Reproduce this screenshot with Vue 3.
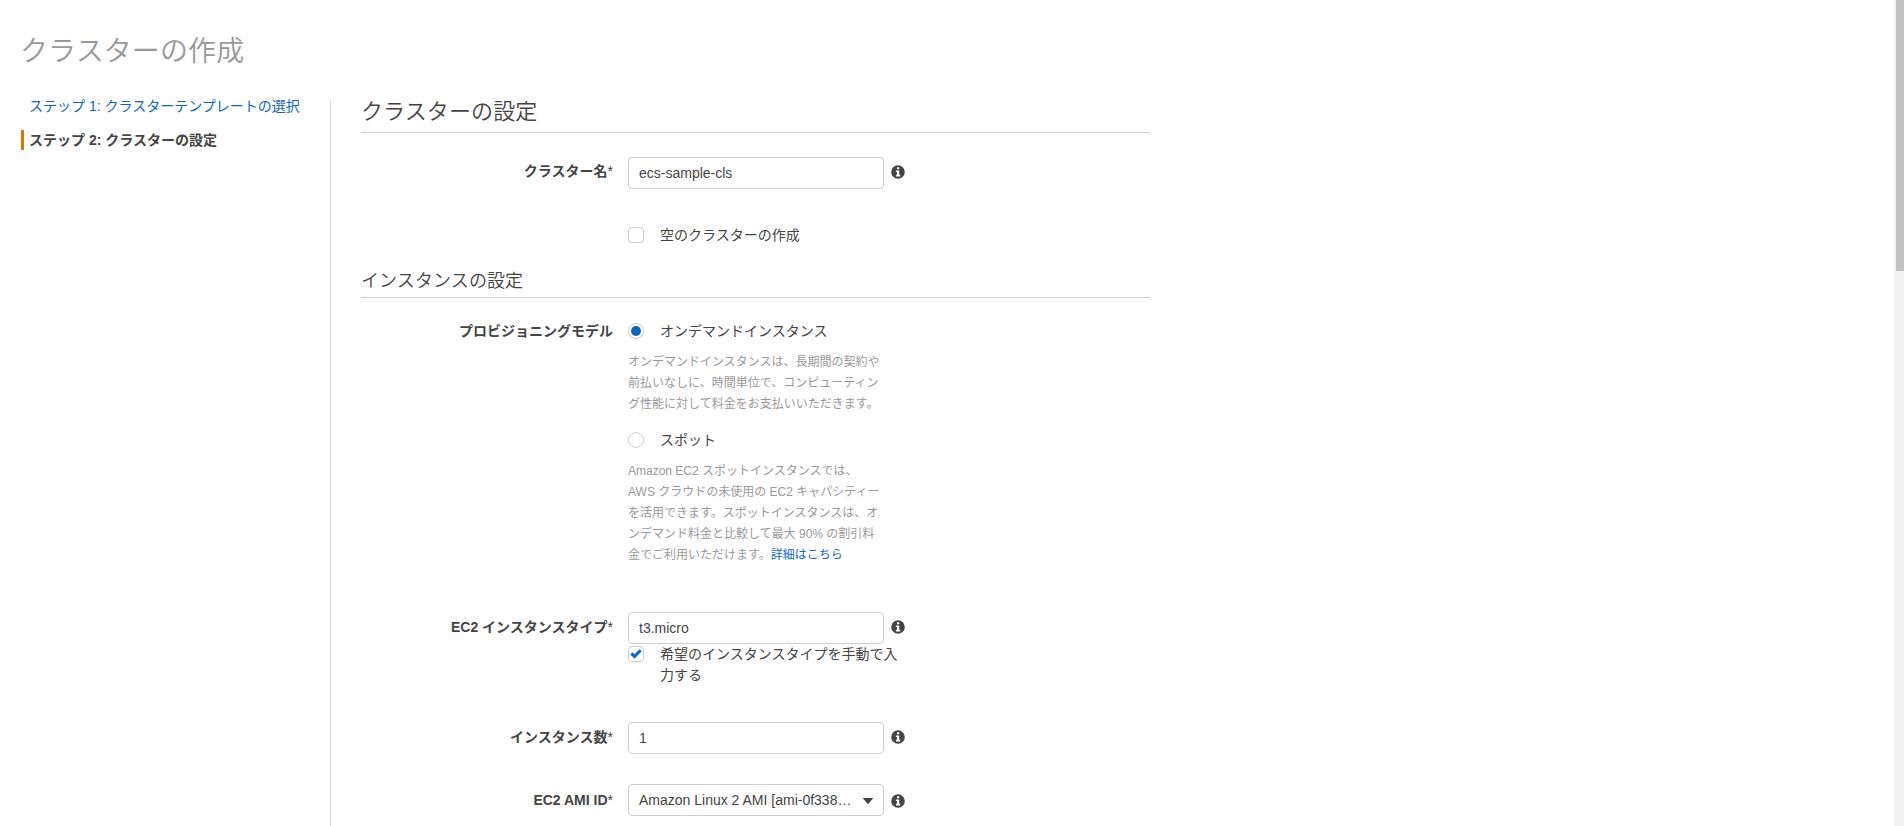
<script setup>
import { ref } from 'vue'

const clusterName = ref('ecs-sample-cls')
const emptyCluster = ref(false)
const model = ref('ondemand')
const instanceType = ref('t3.micro')
const manualType = ref(true)
const count = ref('1')

const onDemandHelp = [
  'オンデマンドインスタンスは、長期間の契約や',
  '前払いなしに、時間単位で、コンピューティン',
  'グ性能に対して料金をお支払いいただきます。',
]
const spotHelp = [
  'Amazon EC2 スポットインスタンスでは、',
  'AWS クラウドの未使用の EC2 キャパシティー',
  'を活用できます。スポットインスタンスは、オ',
  'ンデマンド料金と比較して最大 90% の割引料',
]
const infoPath =
  'M7 .2a6.8 6.8 0 1 0 0 13.6A6.8 6.8 0 0 0 7 .2zM6 2.3h2.2v1.9H6zM4.9 5.4h3.3v4.4h1v1.6H4.9V9.8H6V7H4.9z'
</script>

<template>
  <div class="page">
    <main class="content">
      <h1>クラスターの作成</h1>
      <div class="columns">
        <nav class="steps">
          <a class="step" href="#">ステップ 1: クラスターテンプレートの選択</a>
          <div class="step current">ステップ 2: クラスターの設定</div>
        </nav>
        <section class="form">
          <h2>クラスターの設定</h2>
          <div class="row name-row">
            <label class="label">クラスター名<i>*</i></label>
            <input v-model="clusterName" class="field" type="text" />
            <svg class="info" viewBox="0 0 14 14"><path :d="infoPath" fill-rule="evenodd" /></svg>
          </div>
          <label class="choice empty-choice">
            <input v-model="emptyCluster" type="checkbox" class="native" />
            <span class="box"></span>
            <span>空のクラスターの作成</span>
          </label>

          <h3>インスタンスの設定</h3>
          <div class="row model-row">
            <span class="label">プロビジョニングモデル</span>
            <div>
              <label class="choice">
                <input v-model="model" type="radio" value="ondemand" class="native" />
                <span class="box round"><b v-if="model === 'ondemand'"></b></span>
                <span>オンデマンドインスタンス</span>
              </label>
              <div class="help">
                <div v-for="line in onDemandHelp" :key="line">{{ line }}</div>
              </div>
              <label class="choice spot">
                <input v-model="model" type="radio" value="spot" class="native" />
                <span class="box round"><b v-if="model === 'spot'"></b></span>
                <span>スポット</span>
              </label>
              <div class="help">
                <div v-for="line in spotHelp" :key="line">{{ line }}</div>
                <div>金でご利用いただけます。<a href="#">詳細はこちら</a></div>
              </div>
            </div>
          </div>

          <div class="row type-row">
            <label class="label">EC2 インスタンスタイプ<i>*</i></label>
            <input v-model="instanceType" class="field" type="text" />
            <svg class="info" viewBox="0 0 14 14"><path :d="infoPath" fill-rule="evenodd" /></svg>
          </div>
          <label class="choice manual-choice">
            <input v-model="manualType" type="checkbox" class="native" />
            <span class="box">
              <svg v-if="manualType" viewBox="0 0 14 14"><path d="M1.3 7.4 3.4 5.2 5.5 7.3 10.6 2.2 12.8 4.3 5.5 11.6z" /></svg>
            </span>
            <span>希望のインスタンスタイプを手動で入<br />力する</span>
          </label>

          <div class="row count-row">
            <label class="label">インスタンス数<i>*</i></label>
            <input v-model="count" class="field" type="text" />
            <svg class="info" viewBox="0 0 14 14"><path :d="infoPath" fill-rule="evenodd" /></svg>
          </div>
          <div class="row ami-row">
            <span class="label">EC2 AMI ID<i>*</i></span>
            <div class="field select">
              <span>Amazon Linux 2 AMI [ami-0f338…</span>
              <svg viewBox="0 0 10 6"><path d="M.6 0h8.8q.9 0 .3.8L5.7 5.5q-.7.7-1.4 0L.3.8Q-.3 0 .6 0z" /></svg>
            </div>
            <svg class="info" viewBox="0 0 14 14"><path :d="infoPath" fill-rule="evenodd" /></svg>
          </div>
        </section>
      </div>
    </main>
    <div class="scroll-track"><div class="scroll-thumb"></div></div>
  </div>
</template>

<style>
body {
  overflow: hidden;
}
</style>

<style scoped>
.page {
  display: flex;
  height: 826px;
  overflow: hidden;
  background: #fff;
  color: #444;
  font: 14px/21px "Liberation Sans", "Noto Sans CJK JP", sans-serif;
}
.page * {
  box-sizing: border-box;
}
.content {
  flex: 1;
  display: flex;
  flex-direction: column;
  padding: 32px 0 0 20px;
}
h1, h2, h3 {
  margin: 0;
  font-weight: 350;
}
h1 {
  height: 67px;
  color: #999;
  font-size: 28px;
  line-height: 40px;
  letter-spacing: 0.1px;
}
a {
  color: #1166bb;
  text-decoration: none;
}
.columns {
  flex: 1;
  display: flex;
  margin-left: 1px;
}
.steps {
  width: 310px;
  border-right: 1px solid #ddd;
  flex: none;
}
.step {
  display: block;
  height: 20px;
  line-height: 20px;
  margin: -3px 0 14px;
  padding-left: 8px;
  white-space: nowrap;
}
.step.current {
  margin: 0;
  padding-left: 5px;
  border-left: 3px solid #e07700;
  font-weight: 700;
}
.form {
  width: 789px;
  margin-left: 30px;
  flex: none;
}
h2 {
  height: 34px;
  font-size: 22px;
  line-height: 26px;
  border-bottom: 1px solid #ccc;
}
h3 {
  height: 29px;
  margin-top: 23px;
  font-size: 18px;
  line-height: 24px;
  border-bottom: 1px solid #ccc;
}
h2, h3 {
  letter-spacing: 0.1px;
}
.row {
  display: grid;
  grid-template-columns: 252px 256px 14px;
  column-gap: 15px;
  align-items: start;
}
.label {
  margin-top: 4px;
  text-align: right;
  font-weight: 700;
  white-space: nowrap;
}
.label i {
  font-style: normal;
  font-weight: 400;
}
.field {
  width: 256px;
  height: 32px;
  padding: 0 10px 1px;
  border: 1px solid #ccc;
  border-radius: 4px;
  background: #fff;
  color: #444;
  font: inherit;
  outline: none;
}
.info {
  width: 14px;
  height: 14px;
  margin: 8px 0 0 -8px;
  fill: #444;
}
.name-row {
  margin-top: 24px;
}
.choice {
  display: flex;
  gap: 16px;
}
.native {
  display: none;
}
.box {
  width: 16px;
  height: 16px;
  margin-top: 2px;
  border: 1px solid #ccc;
  border-radius: 4px;
  flex: none;
}
.box svg {
  display: block;
  width: 14px;
  height: 14px;
  fill: #1166bb;
}
.round {
  display: flex;
  align-items: center;
  justify-content: center;
  border-radius: 50%;
}
.round b {
  width: 10px;
  height: 10px;
  border-radius: 50%;
  background: #1166bb;
}
.empty-choice {
  margin: 36px 0 0 267px;
}
.model-row {
  margin-top: 23px;
}
.model-row .label {
  margin-top: 0;
}
.help {
  margin-top: 10px;
  color: #999;
  font-size: 12px;
  white-space: nowrap;
}
.spot {
  margin-top: 15px;
}
.type-row {
  margin-top: 46px;
}
.type-row .label {
  margin-top: 5px;
}
.manual-choice {
  margin: 0 0 0 267px;
}
.count-row {
  margin-top: 36px;
}
.count-row .label {
  margin-top: 5px;
}
.ami-row .label {
  margin-top: 6px;
}
.ami-row {
  margin-top: 30px;
}
.ami-row .info {
  margin-top: 10px;
}
.select {
  display: flex;
  align-items: center;
  justify-content: space-between;
  padding: 1px 10px 0;
}
.select svg {
  width: 10px;
  height: 6px;
  fill: #444;
}
.scroll-track {
  width: 10px;
  padding-left: 2px;
  background: #f1f1f1;
}
.scroll-thumb {
  height: 271px;
  background: #c1c1c1;
}
</style>
